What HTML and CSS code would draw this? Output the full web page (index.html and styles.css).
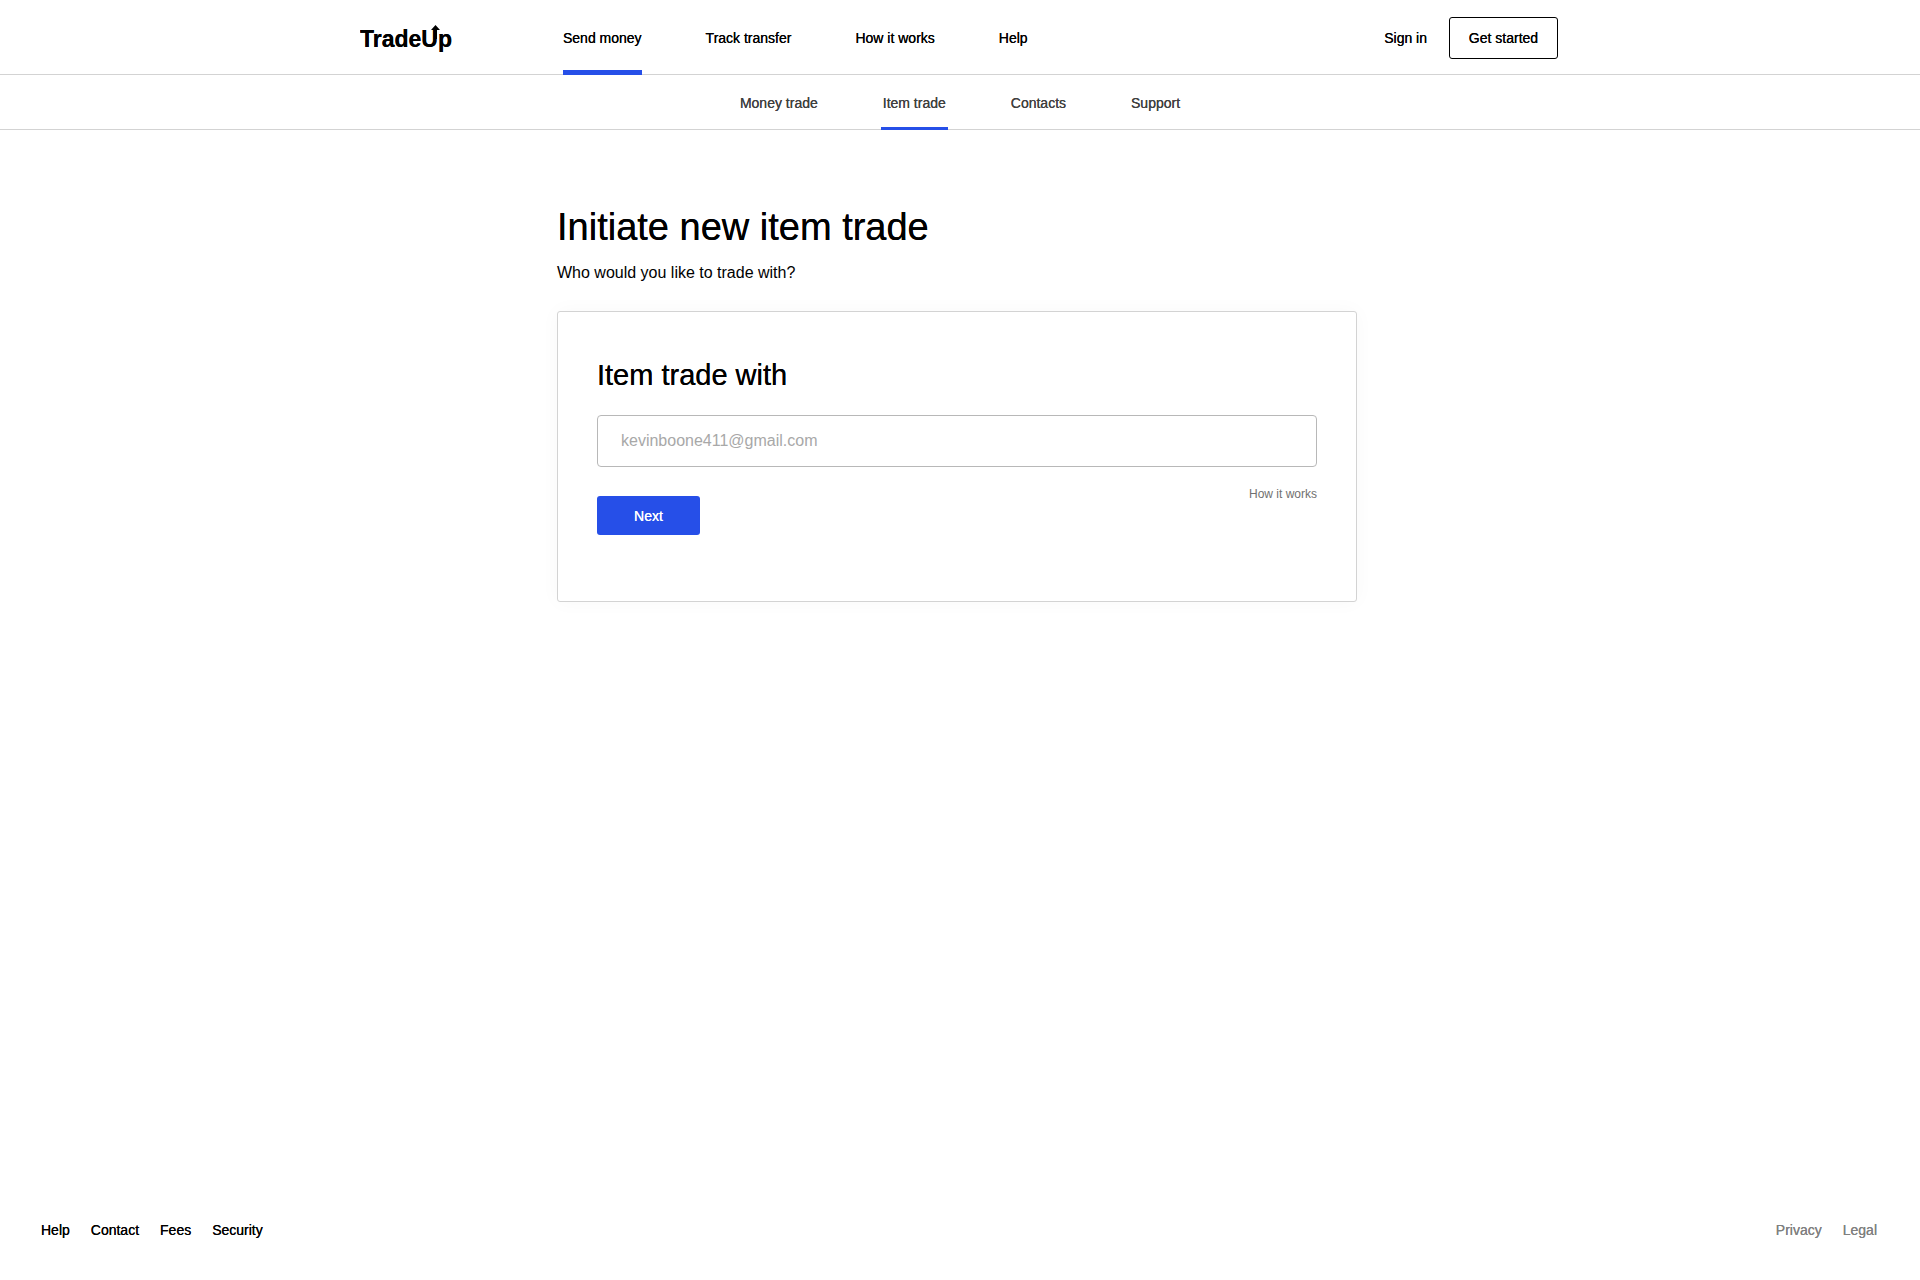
FILE: index.html
```html
<!DOCTYPE html>
<html lang="en">
<head>
<meta charset="utf-8">
<meta name="viewport" content="width=device-width, initial-scale=1">
<title>TradeUp</title>
<link rel="stylesheet" href="styles.css">
</head>
<body>
<header class="header">
  <div class="header-inner">
    <a class="logo" href="#" aria-label="TradeUp">
      <svg width="96" height="32" viewBox="0 0 96 32" aria-hidden="true">
        <text class="logo-text" x="0" y="26">TradeUp</text>
        <path d="M74 18V9h-3L75.500 4 80 9h-3v9z"/>
      </svg>
    </a>
    <nav class="main-nav" aria-label="Main">
      <a class="main-link active" href="#">Send money</a>
      <a class="main-link" href="#">Track transfer</a>
      <a class="main-link" href="#">How it works</a>
      <a class="main-link" href="#">Help</a>
    </nav>
    <div class="account">
      <a class="sign-in" href="#">Sign in</a>
      <button class="get-started" type="button">Get started</button>
    </div>
  </div>
</header>
<nav class="sub-nav" aria-label="Trade">
  <a class="sub-link" href="#">Money trade</a>
  <a class="sub-link active" href="#">Item trade</a>
  <a class="sub-link" href="#">Contacts</a>
  <a class="sub-link" href="#">Support</a>
</nav>
<main class="main">
  <div class="content">
    <h1 class="title">Initiate new item trade</h1>
    <p class="subtitle">Who would you like to trade with?</p>
    <form class="card">
      <label class="card-title" for="partner">Item trade with</label>
      <input class="field" id="partner" type="email" placeholder="kevinboone411@gmail.com">
      <div class="actions">
        <button class="next" type="button">Next</button>
        <a class="hint" href="#">How it works</a>
      </div>
    </form>
  </div>
</main>
<footer class="footer">
  <nav class="footer-links" aria-label="Footer">
    <a href="#">Help</a>
    <a href="#">Contact</a>
    <a href="#">Fees</a>
    <a href="#">Security</a>
  </nav>
  <nav class="footer-links legal" aria-label="Legal">
    <a href="#">Privacy</a>
    <a href="#">Legal</a>
  </nav>
</footer>
</body>
</html>
```
FILE: styles.css
```css
* {
  box-sizing: border-box;
}

body {
  margin: 0;
  min-height: 100vh;
  display: flex;
  flex-direction: column;
  background: #fff;
  color: #000;
  font-family: "Helvetica Neue", "Liberation Sans", Arial, sans-serif;
  font-size: 14px;
  line-height: 20px;
}

a {
  color: inherit;
  text-decoration: none;
}

button,
input {
  font: inherit;
}

/* Gives the regular face a medium weight */
.header,
.sub-nav,
.title,
.card-title,
.next,
.footer {
  text-shadow: 0 0 0 currentColor;
}

.header {
  border-bottom: 1px solid #d3d3d3;
}

.header-inner {
  max-width: 1200px;
  height: 74px;
  margin: 0 auto;
  padding-right: 2px;
  display: flex;
  align-items: center;
}

.logo {
  width: 203px;
}

.logo svg {
  display: block;
}

.logo-text {
  font-size: 23px;
  font-weight: 700;
}

.main-nav {
  align-self: stretch;
  display: flex;
  gap: 64px;
  margin-bottom: -1px;
}

.main-link {
  padding-top: 28px;
  border-bottom: 5px solid transparent;
}

.main-link.active {
  border-color: #264fe8;
}

.account {
  margin-left: auto;
  display: flex;
  align-items: center;
  gap: 22px;
  padding-top: 2px;
}

.get-started {
  width: 109px;
  height: 42px;
  padding: 0;
  border: 1px solid #000;
  border-radius: 3px;
  background: transparent;
  color: #000;
  text-shadow: inherit;
}

.sub-nav {
  height: 55px;
  display: flex;
  justify-content: center;
  gap: 61px;
  border-bottom: 1px solid #d3d3d3;
  color: #404040;
}

.sub-link {
  margin-bottom: -1px;
  padding: 18px 2px 0;
  border-bottom: 3px solid transparent;
}

.sub-link.active {
  border-color: #264fe8;
}

.main {
  flex: 1;
  padding: 73px 6px 40px 0;
}

.content {
  max-width: 800px;
  margin: 0 auto;
}

.title {
  margin: 0;
  font-size: 38px;
  font-weight: 400;
  line-height: 48px;
}

.subtitle {
  margin: 12px 0 28px;
  font-size: 16px;
  line-height: 20px;
}

.card {
  min-height: 291px;
  padding: 43px 39px 39px;
  border: 1px solid #d3d3d3;
  border-radius: 3px;
  background: #fff;
  box-shadow: 0 0 20px rgba(0, 0, 0, 0.03);
}

.card-title {
  display: block;
  margin-bottom: 20px;
  font-size: 29px;
  line-height: 40px;
}

.field {
  display: block;
  width: 100%;
  height: 52px;
  padding: 0 23px;
  border: 1px solid #b8b8b8;
  border-radius: 4px;
  background: #fff;
  font-size: 16px;
}

.field::placeholder {
  color: #a8a8a8;
  opacity: 1;
}

.actions {
  display: flex;
  justify-content: space-between;
  align-items: flex-start;
  padding-top: 17px;
}

.next {
  width: 103px;
  height: 39px;
  margin-top: 12px;
  padding: 0;
  border: 0;
  border-radius: 3px;
  background: #264fe8;
  color: #fff;
}

.hint {
  color: #707070;
  font-size: 12px;
}

.footer {
  display: flex;
  justify-content: space-between;
  padding: 0 43px 40px 41px;
}

.footer-links {
  display: flex;
  gap: 21px;
}

.legal {
  color: #808080;
}
```
